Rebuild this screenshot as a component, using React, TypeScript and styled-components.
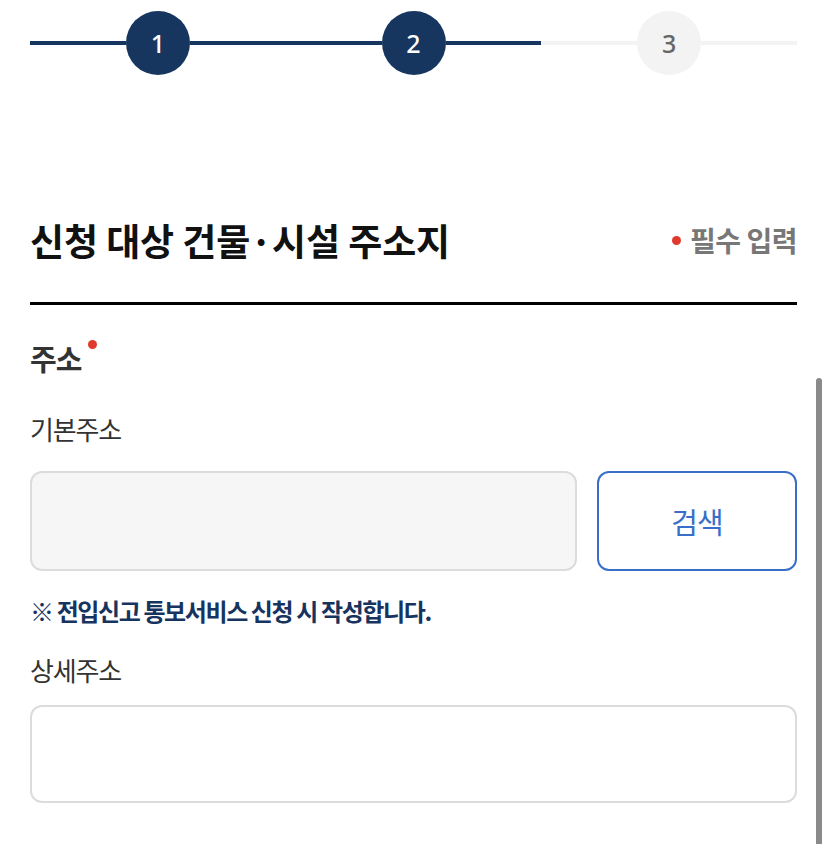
import React from "react";
import styled, { createGlobalStyle } from "styled-components";

const Global = createGlobalStyle`
  html, body { margin: 0; padding: 0; background: #fff; }
  body { font-family: "Noto Sans CJK KR", "Noto Sans", sans-serif; color: #222; overflow: hidden; }
  * { box-sizing: border-box; }
`;

const Page = styled.div`
  padding: 11px 31px 0 30px;
  height: 844px;
`;

const Stepper = styled.div`
  display: flex;
  align-items: center;
  height: 64px;
`;

const Line = styled.div<{ $grow: number; $bg: string }>`
  flex: ${(p) => p.$grow};
  height: 4px;
  background: ${(p) => p.$bg};
`;

const Circle = styled.div<{ $active?: boolean }>`
  width: 64px;
  height: 64px;
  border-radius: 50%;
  flex: none;
  display: flex;
  align-items: center;
  justify-content: center;
  background: ${(p) => (p.$active ? "#16365f" : "#f3f3f3")};
  color: ${(p) => (p.$active ? "#fff" : "#666")};
  font-family: "Noto Sans", sans-serif;
  font-size: 25px;
  font-weight: 500;
`;

const Header = styled.div`
  display: flex;
  align-items: center;
  justify-content: space-between;
  margin-top: 139px;
  padding-bottom: 36px;
  border-bottom: 3px solid #000;
`;

const Title = styled.h2`
  margin: 0;
  font-size: 37px;
  font-weight: 700;
  color: #111;
  letter-spacing: -0.1px;
  line-height: 52px;
`;

const Required = styled.span`
  display: flex;
  align-items: center;
  gap: 9px;
  font-size: 28px;
  font-weight: 700;
  color: #777;
  letter-spacing: -0.5px;
`;

const Dot = styled.span<{ $size?: number }>`
  display: inline-block;
  width: ${(p) => p.$size ?? 9}px;
  height: ${(p) => p.$size ?? 9}px;
  border-radius: 50%;
  background: #e0392d;
`;

const FieldTitle = styled.div`
  display: flex;
  align-items: flex-start;
  gap: 7px;
  margin-top: 34px;
  font-size: 29px;
  font-weight: 700;
  color: #333;
  letter-spacing: -1px;
  line-height: 38px;
`;

const SupDot = styled(Dot)`
  margin-top: 1px;
`;

const Label = styled.div`
  margin-top: 37px;
  font-size: 26px;
  font-weight: 400;
  color: #333;
  letter-spacing: -1.2px;
  line-height: 30px;
`;

const Row = styled.div`
  display: flex;
  gap: 20px;
  margin-top: 27px;
`;

const Input = styled.div<{ $disabled?: boolean }>`
  flex: 1;
  height: 100px;
  border: 2px solid #dcdcdc;
  border-radius: 12px;
  background: ${(p) => (p.$disabled ? "#f6f6f6" : "#fff")};
`;

const DetailInput = styled(Input)`
  height: 98px;
  margin-top: 20px;
`;

const SearchButton = styled.button`
  width: 200px;
  height: 100px;
  border: 2px solid #3a6fc9;
  border-radius: 12px;
  background: #fff;
  color: #3a6fc9;
  font-family: "Noto Sans CJK KR", sans-serif;
  font-size: 29px;
  font-weight: 400;
  letter-spacing: -1px;
  padding: 0;
`;

const Note = styled.p`
  margin: 22px 0 0;
  font-size: 24px;
  font-weight: 700;
  color: #17335f;
  letter-spacing: -1.4px;
  line-height: 36px;
`;

const DetailLabel = styled(Label)`
  margin-top: 26px;
`;

const Scrollbar = styled.div`
  position: fixed;
  right: 6px;
  top: 378px;
  bottom: 0;
  width: 6px;
  border-radius: 3px 3px 0 0;
  background: #8a8a8a;
`;

export default function App() {
  return (
    <>
      <Global />
      <Page>
        <Stepper>
          <Line $grow={1} $bg="#16365f" />
          <Circle $active>1</Circle>
          <Line $grow={2} $bg="#16365f" />
          <Circle $active>2</Circle>
          <Line $grow={2} $bg="linear-gradient(to right, #16365f 50%, #f3f3f3 50%)" />
          <Circle>3</Circle>
          <Line $grow={1} $bg="#f3f3f3" />
        </Stepper>

        <Header>
          <Title>신청 대상 건물·시설 주소지</Title>
          <Required>
            <Dot />
            필수 입력
          </Required>
        </Header>

        <FieldTitle>
          주소
          <SupDot />
        </FieldTitle>

        <Label>기본주소</Label>
        <Row>
          <Input $disabled />
          <SearchButton>검색</SearchButton>
        </Row>
        <Note>※ 전입신고 통보서비스 신청 시 작성합니다.</Note>

        <DetailLabel>상세주소</DetailLabel>
        <DetailInput />
      </Page>
      <Scrollbar />
    </>
  );
}
